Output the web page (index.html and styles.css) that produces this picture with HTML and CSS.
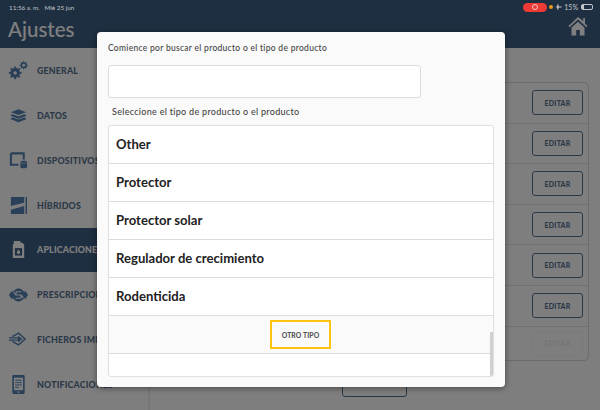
FILE: index.html
```html
<!DOCTYPE html>
<html lang="es">
<head>
<meta charset="utf-8">
<title>Ajustes</title>
<link rel="stylesheet" href="styles.css">
</head>
<body>
<div class="app">
  <header class="top">
    <h1 class="title">Ajustes</h1>
    <svg class="home" viewBox="0 0 20 20" width="20" height="20"><path d="M10 1 0.500 10l1 1.200L10 3.600l8.500 7.600 1-1.200-2.500-2.300V2h-1.800v3.100zM3.500 11.500V19.500h4.700v-5.500h3.600v5.500h4.700v-8L10 5.800z" fill="#8b8b8b"/></svg>
  </header>
  <div class="main">
    <nav class="side">
      <div class="item"><svg class="ic" viewBox="0 0 20 20"><g fill="#2a4058"><circle cx="6.500" cy="12.500" r="5.200"/><circle cx="15.500" cy="4.500" r="3.200"/></g><g stroke="#2a4058" stroke-width="2"><path d="M6.500 5.800v13.400M-.2 12.500h13.400M1.800 7.800l9.400 9.400M11.200 7.800l-9.400 9.400"/></g><g stroke="#2a4058" stroke-width="1.300"><path d="M15.500.200v8.600M11.200 4.500h8.600M12.500 1.500l6 6M18.500 1.500l-6 6"/></g><circle cx="6.500" cy="12.500" r="1.800" fill="#7f7f80"/><circle cx="15.500" cy="4.500" r="1.500" fill="#7f7f80"/></svg><span>GENERAL</span></div>
      <div class="item"><svg class="ic" viewBox="0 0 20 20"><g fill="#2a4058"><path d="M10 3.500 18 6.500 10 9.500 2 6.500z"/><path d="M2 9.500 4 8.700l6 2.300 6-2.300 2 .8v1L10 13.500 2 10.500z"/><path d="M2 12.800 4 12l6 2.300 6-2.300 2 .8v1.200L10 17 2 14z"/></g></svg><span>DATOS</span></div>
      <div class="item"><svg class="ic" viewBox="0 0 20 20"><path d="M2 2.500h13.500v6.500M2 2.500v12h8" fill="none" stroke="#2a4058" stroke-width="2.200"/><path d="M12 11.500c0-1.600 7-1.600 7 0v5.500c0 1.600-7 1.600-7 0z" fill="#2a4058"/><path d="M12.500 12.300c1.500.8 4.500.8 6 0" fill="none" stroke="#7f7f80" stroke-width=".6"/></svg><span>DISPOSITIVOS</span></div>
      <div class="item"><svg class="ic" viewBox="0 0 20 20"><path d="M2 1h14v6L2 10.500z" fill="#2a4058"/><path d="M2 14.500l14-4V19H2z" fill="#2a4058"/><path d="M18.200 1v18" stroke="#2a4058" stroke-width="1.500"/></svg><span>HÍBRIDOS</span></div>
      <div class="item item-on"><svg class="ic" viewBox="0 0 20 20"><path d="M5 1h7v2h2l2 2v14H4V5l1-1z" fill="#9a9a9a"/><path d="M6 8.500h8v8H6z" fill="#1f3042"/><path d="M10 10l1.600 2.500a1.700 1.700 0 1 1-3.200 0z" fill="#9a9a9a"/></svg><span>APLICACIONES</span></div>
      <div class="item"><svg class="ic ic-wide" viewBox="0 0 20 14"><path d="M10 0 13 1l3 2.500L17.500 3 20 7l-2.500 4-1.500-.5L13 13l-3 1-3-1-3-2.500-1.500.5L0 7l2.500-4 1.500.5L7 1z" fill="#2a4058"/><path d="M7 3.500h6M7.500 3.500v3.500h5V10.500H7M7 7 5 4M13 7l2 3" fill="none" stroke="#7f7f80" stroke-width="1.100"/></svg><span>PRESCRIPCIONES</span></div>
      <div class="item"><svg class="ic ic-wide" viewBox="0 0 20 14"><path d="M3.500 4.500 10 .8 17 7l-7 6.200-6.500-3.700" fill="none" stroke="#2a4058" stroke-width="1.500"/><path d="M0 5.800h10M0 8.200h10" stroke="#2a4058" stroke-width="1.300"/><path d="M9.500 3.500 14 7l-4.500 3.500z" fill="#2a4058"/></svg><span>FICHEROS IMPORTADOS</span></div>
      <div class="item"><svg class="ic" viewBox="0 0 20 20"><rect x="3.500" y="0" width="13" height="20" rx="1.200" fill="#2a4058"/><path d="M5.200 2.800h9.600V16H5.200z" fill="#7f7f80"/><path d="M6.500 5.500h7M6.500 8h7M6.500 10.500h7M6.500 13h4" stroke="#2a4058"/><circle cx="10" cy="18" r="1" fill="#7f7f80"/></svg><span>NOTIFICACIONES</span></div>
    </nav>
    <section class="content">
      <div class="card">
        <div class="row"><button class="edit">EDITAR</button></div>
        <div class="row"><button class="edit">EDITAR</button></div>
        <div class="row"><button class="edit">EDITAR</button></div>
        <div class="row"><button class="edit">EDITAR</button></div>
        <div class="row"><button class="edit">EDITAR</button></div>
        <div class="row"><button class="edit">EDITAR</button></div>
        <div class="row row-last"><button class="edit edit-off">EDITAR</button></div>
      </div>
      <div class="foot"><button class="more"></button></div>
    </section>
  </div>
</div>
<div class="shade"></div>
<div class="status">
  <span class="time">11:56 a. m.&nbsp;&nbsp;&nbsp;Mié 25 jun</span>
  <span class="status-right">
    <span class="rec"><span class="rec-dot"></span></span>
    <span class="dot"></span>
    <svg class="plane" viewBox="0 0 10 8" width="7" height="6"><path d="M0 4 3 3.200 3.500 0h1l1 3.200L9 3.200 10 4 9 4.800 5.500 4.800 4.500 8h-1L3 4.800z" fill="#c4c6c9"/></svg>
    <span class="pct">15%</span>
    <span class="batt"><span class="batt-fill"></span></span>
  </span>
</div>
<div class="modal">
  <p class="label">Comience por buscar el producto o el tipo de producto</p>
  <div class="search"></div>
  <p class="label label-2">Seleccione el tipo de producto o el producto</p>
  <div class="list">
    <div class="opt"><span>Other</span></div>
    <div class="opt"><span>Protector</span></div>
    <div class="opt"><span>Protector solar</span></div>
    <div class="opt"><span>Regulador de crecimiento</span></div>
    <div class="opt"><span>Rodenticida</span></div>
    <div class="list-foot"><button class="other">OTRO TIPO</button></div>
    <div class="scroll"></div>
  </div>
</div>
</body>
</html>
```
FILE: styles.css
```css
* { box-sizing: border-box; }
html, body { margin: 0; padding: 0; }
body {
  width: 600px;
  height: 410px;
  overflow: hidden;
  position: relative;
  font-family: Lato, "Open Sans", sans-serif;
  background: #fdfdfd;
}
.app { width: 600px; height: 410px; display: flex; flex-direction: column; }
.top {
  height: 48px;
  background: #3e5f84;
  display: flex;
  align-items: flex-end;
  justify-content: space-between;
  padding: 0 12px 6px 8px;
  flex: none;
}
.title { margin: 0; font-size: 20.500px; line-height: 26px; font-weight: 500; color: #fff; }
.home { margin-bottom: 6px; filter: brightness(2); }
.main { flex: 1; display: flex; min-height: 0; }
.side {
  width: 150px;
  flex: none;
  border-right: 2px solid #eee;
  padding-top: .5px;
  display: flex;
  flex-direction: column;
}
.item {
  height: 44.750px;
  flex: none;
  display: flex;
  align-items: center;
  padding-left: 9px;
  gap: 9px;
  font-size: 8.800px;
  font-weight: 900;
  letter-spacing: .2px;
  color: #557391;
  white-space: nowrap;
}
.item-on { background: #3e5f84; color: #fff; }
.ic { width: 19px; height: 19px; flex: none; filter: brightness(2); overflow: visible; }
.ic-wide { height: 14px; }
.content { flex: 1; padding: 34px 11px 0 10px; min-width: 0; display: flex; flex-direction: column; }
.card {
  height: 279px;
  border: 1px solid #d4d8dc;
  border-radius: 5px;
  display: flex;
  flex-direction: column;
  flex: none;
}
.row {
  height: 40.600px;
  flex: none;
  display: flex;
  align-items: center;
  justify-content: flex-end;
  padding-right: 5px;
  border-bottom: 1px solid #e2e4e6;
}
.row-last { flex: 1; height: auto; border-bottom: 0; }
.edit {
  width: 51px;
  height: 25px;
  padding: 0;
  border: 1.500px solid #557391;
  border-radius: 3px;
  background: transparent;
  font: 900 7px Lato, sans-serif;
  letter-spacing: .2px;
  color: #557391;
}
.edit-off { border-color: #f2f2f2; color: #ececec; }
.foot { display: flex; justify-content: center; padding-top: 18px; }
.more {
  width: 65px;
  height: 18px;
  padding: 0;
  border: 1.500px solid #557391;
  border-radius: 3px;
  background: transparent;
}
.shade { position: absolute; inset: 0; background: rgba(0, 0, 0, .5); }
.status {
  position: absolute;
  top: 0;
  left: 0;
  width: 600px;
  height: 14px;
  padding: 0 7px 0 9px;
  display: flex;
  align-items: center;
  justify-content: space-between;
  font-size: 6.300px;
  color: #c4c6c9;
}
.status-right { display: flex; align-items: center; }
.rec {
  width: 24px;
  height: 9px;
  margin-right: 2px;
  border-radius: 5px;
  background: #ee3a35;
  display: flex;
  align-items: center;
  justify-content: center;
}
.rec-dot { width: 6px; height: 6px; border-radius: 50%; background: #ee3a35; border: 1.500px solid #f6c8c6; }
.dot { width: 4px; height: 4px; border-radius: 50%; background: #f09a1a; margin-right: 2px; }
.plane { margin-right: 2px; }
.pct { margin-right: 3px; font-size: 7px; }
.batt { width: 12px; height: 6px; border: 1px solid #c4c6c9; border-radius: 2px; display: block; }
.batt-fill { display: block; width: 2px; height: 100%; background: #c4c6c9; }
.modal {
  position: absolute;
  left: 97px;
  top: 32px;
  width: 408px;
  height: 355px;
  background: #fafafa;
  border-radius: 4px;
  padding: 11px 11px 0;
  box-shadow: 0 1px 6px rgba(0, 0, 0, .45);
}
.label { margin: 0; font-size: 8.500px; line-height: 11px; font-weight: 500; letter-spacing: .29px; color: #444; }
.search {
  width: 313px;
  height: 33px;
  margin-top: 11px;
  background: #fff;
  border: 1px solid #dcdcdc;
  border-radius: 3px;
}
.label-2 { margin: 8px 0 8px 4px; font-size: 9px; letter-spacing: .29px; }
.list {
  position: relative;
  width: 386px;
  height: 252px;
  background: #fff;
  border: 1px solid #e0e0e0;
  border-radius: 3px;
  overflow: hidden;
}
.opt {
  height: 38px;
  padding: 0 0 2px 7px;
  display: flex;
  align-items: center;
  font-size: 13.100px;
  font-weight: 700;
  color: #222;
  border-bottom: 1px solid #dcdcdc;
}
.list-foot {
  height: 38px;
  background: #fafafa;
  border-bottom: 1px solid #dcdcdc;
  display: flex;
  align-items: center;
  justify-content: center;
}
.other {
  width: 61px;
  height: 29px;
  margin-right: 1px;
  padding: 0;
  border: 2px solid #fdc30f;
  background: transparent;
  font: 900 6.800px Lato, sans-serif;
  letter-spacing: .1px;
  color: #555;
}
.scroll {
  position: absolute;
  right: 0;
  top: 206px;
  width: 3px;
  height: 44px;
  background: #d0d0d0;
}
```
